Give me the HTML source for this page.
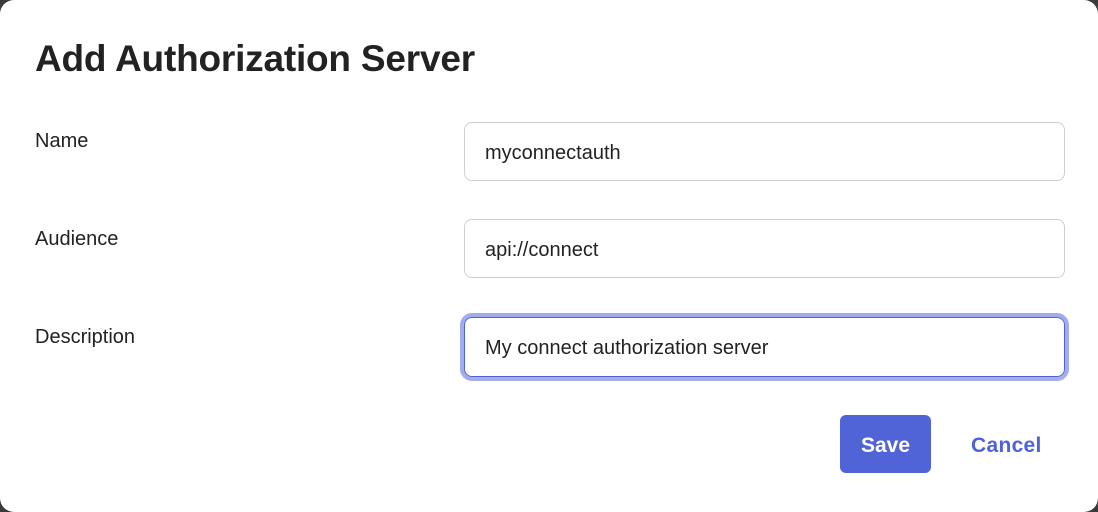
<!DOCTYPE html>
<html><head><style>
html,body{margin:0;padding:0;width:1098px;height:512px;background:#3a3a3a;overflow:hidden;font-family:"Liberation Sans",sans-serif;}
.d{position:absolute;left:0;top:0;width:1098px;height:512px;background:#fff;border-radius:14px;}
h1{position:absolute;left:35px;top:38px;margin:0;font-size:37px;font-weight:bold;color:#222;letter-spacing:-0.2px;}
.l{position:absolute;left:35px;font-size:20px;color:#222;}
.i{position:absolute;left:464px;width:599px;height:57px;border:1px solid #cfcfd3;border-radius:8px;box-sizing:content-box;font-size:20px;color:#222;line-height:61px;text-indent:20px;}
.f{border:1px solid #4f62d7;box-shadow:0 0 0 4px #a3acec;}
.s{position:absolute;left:840px;top:415px;width:91px;height:58px;background:#5064d8;border-radius:6px;color:#fff;font-weight:bold;font-size:21px;text-align:center;line-height:61px;}
.c{position:absolute;left:971px;top:415px;line-height:61px;color:#4f62d7;font-weight:bold;font-size:21px;letter-spacing:0.3px;}
</style></head><body><div class="d">
<h1>Add Authorization Server</h1>
<div class="l" style="top:130px">Name</div>
<div class="l" style="top:228px">Audience</div>
<div class="l" style="top:326px">Description</div>
<div class="i" style="top:122px">myconnectauth</div>
<div class="i" style="top:219px">api://connect</div>
<div class="i f" style="top:317px;height:58px;line-height:61px">My connect authorization server</div>
<div class="s">Save</div>
<div class="c">Cancel</div>
</div></body></html>
